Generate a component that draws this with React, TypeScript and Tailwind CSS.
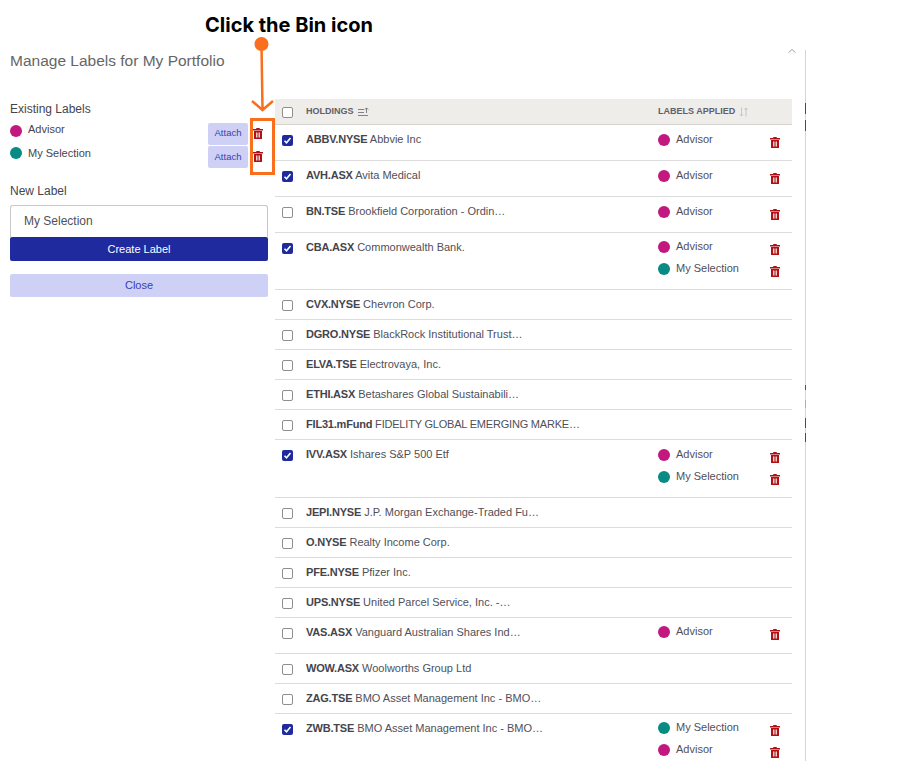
import React from "react";

const font = { fontFamily: '"Liberation Sans", Arial, sans-serif' };

type Label = "Advisor" | "My Selection";

interface Holding {
  ticker: string;
  name: string;
  checked?: boolean;
  tight?: boolean;
  nudge?: boolean;
  labels?: Label[];
}

const HOLDINGS: Holding[] = [
  { ticker: "ABBV.NYSE", name: "Abbvie Inc", checked: true, labels: ["Advisor"] },
  { ticker: "AVH.ASX", name: "Avita Medical", checked: true, labels: ["Advisor"] },
  { ticker: "BN.TSE", name: "Brookfield Corporation - Ordin…", labels: ["Advisor"] },
  { ticker: "CBA.ASX", name: "Commonwealth Bank.", checked: true, nudge: true, labels: ["Advisor", "My Selection"] },
  { ticker: "CVX.NYSE", name: "Chevron Corp." },
  { ticker: "DGRO.NYSE", name: "BlackRock Institutional Trust…" },
  { ticker: "ELVA.TSE", name: "Electrovaya, Inc." },
  { ticker: "ETHI.ASX", name: "Betashares Global Sustainabili…" },
  { ticker: "FIL31.mFund", name: "FIDELITY GLOBAL EMERGING MARKE…", tight: true },
  { ticker: "IVV.ASX", name: "Ishares S&P 500 Etf", checked: true, labels: ["Advisor", "My Selection"] },
  { ticker: "JEPI.NYSE", name: "J.P. Morgan Exchange-Traded Fu…" },
  { ticker: "O.NYSE", name: "Realty Income Corp." },
  { ticker: "PFE.NYSE", name: "Pfizer Inc." },
  { ticker: "UPS.NYSE", name: "United Parcel Service, Inc. -…" },
  { ticker: "VAS.ASX", name: "Vanguard Australian Shares Ind…", nudge: true, labels: ["Advisor"] },
  { ticker: "WOW.ASX", name: "Woolworths Group Ltd" },
  { ticker: "ZAG.TSE", name: "BMO Asset Management Inc - BMO…" },
  { ticker: "ZWB.TSE", name: "BMO Asset Management Inc - BMO…", checked: true, nudge: true, labels: ["My Selection", "Advisor"] },
];

function Bin() {
  return (
    <svg width="10" height="11" viewBox="0 0 10 11" className="block shrink-0">
      <path
        fill="#b01116"
        fillRule="evenodd"
        d="M3.5 0h3l.5 1.1h3v1.4H0V1.1h3zM1 3h8v8H1zM3.2 4.6v4.8h1.2V4.6zm2.4 0v4.8h1.2V4.6z"
      />
    </svg>
  );
}

function Dot({ label }: { label: Label }) {
  return <span className={`block w-3 h-3 rounded-full shrink-0 ${label === "Advisor" ? "bg-[#c2187f]" : "bg-[#078b83]"}`} />;
}

function Check({ checked }: { checked?: boolean }) {
  if (checked) {
    return (
      <span className="w-[11px] h-[11px] rounded-[2px] bg-[#1f2a9e] flex items-center justify-center shrink-0">
        <svg width="9" height="9" viewBox="0 0 9 9">
          <path d="M1.5 4.8l2 2 4-4.8" fill="none" stroke="#fff" strokeWidth="1.6" />
        </svg>
      </span>
    );
  }
  return <span className="block w-[11px] h-[11px] rounded-[2px] border border-[#8e8e8e] bg-white shrink-0" />;
}

function Row({ h }: { h: Holding }) {
  const labels = h.labels ?? [];
  let pad = "pt-[8px] pb-[8px]";
  if (labels.length > 0) {
    if (!h.nudge) pad = "pt-[8px] pb-[14px]";
    else pad = labels.length === 1 ? "pt-[7px] pb-[15px]" : "pt-[7px] pb-[14px]";
  }
  return (
    <div className="flex border-b border-[#dcdcdc] text-[11px] text-[#4f5058] last:border-b-0">
      <div className="w-[31px] pl-[7px] pt-[10px] shrink-0">
        <Check checked={h.checked} />
      </div>
      <div className={`w-[352px] shrink-0 pt-[8px] pb-[8px] leading-[13px] whitespace-nowrap ${h.tight ? "tracking-[-0.2px]" : ""}`}>
        <span className="font-bold text-[#44454c] tracking-[-0.2px]">{h.ticker}</span> {h.name}
      </div>
      <div className={`flex-1 flex flex-col gap-[9px] ${pad}`}>
        {labels.map((l) => (
          <div key={l} className="flex items-center h-[13px]">
            <Dot label={l} />
            <span className="ml-[6px] w-[94px]">{l}</span>
            <span className="block mt-[6px]">
              <Bin />
            </span>
          </div>
        ))}
      </div>
    </div>
  );
}

export default function App() {
  return (
    <div className="relative w-[917px] h-[761px] overflow-hidden bg-white pt-[50px]" style={font}>
      <div className="w-[806px] h-[711px] border-r border-[#d4d4d4]">
        <h1 className="pl-[10px] pt-[1px] text-[15.5px] leading-[20px] font-normal text-[#666666]">Manage Labels for My Portfolio</h1>

        <div className="flex mt-[28px] pl-[10px]">
          {/* Left column */}
          <div className="w-[258px] shrink-0 text-[11px] text-[#44454c]">
            <p className="text-[12px] leading-[19px] mt-[1px]">Existing Labels</p>
            <div className="flex items-center h-[23px] -mb-px">
              <Dot label="Advisor" />
              <span className="ml-[6px] flex-1 -mt-[3px]">Advisor</span>
              <button className="w-[40px] h-[22px] mt-[6px] rounded-[2px] bg-[#ced1f5] text-[#3a40b0] text-[9.5px]">Attach</button>
              <span className="block w-[20px] pl-[5px] mt-[5px]">
                <Bin />
              </span>
            </div>
            <div className="flex items-center h-[23px] mt-[1px]">
              <span className="block -mt-[2px]">
                <Dot label="My Selection" />
              </span>
              <span className="ml-[6px] flex-1">My Selection</span>
              <button className="w-[40px] h-[22px] mt-[7px] rounded-[2px] bg-[#ced1f5] text-[#3a40b0] text-[9.5px]">Attach</button>
              <span className="block w-[20px] pl-[5px] mt-[5px]">
                <Bin />
              </span>
            </div>

            <p className="text-[12px] leading-[16px] mt-[18px]">New Label</p>
            <div className="mt-[6px] h-[32px] pl-[13px] pb-[1px] flex items-center rounded-t-[3px] border border-b-0 border-[#c8c8c8] text-[12px] text-[#4f5058]">My Selection</div>
            <button className="block w-full h-[24px] rounded-[2px] bg-[#1f2a9e] text-white text-[11px]">Create Label</button>
            <button className="block w-full h-[23px] mt-[13px] rounded-[2px] bg-[#ced1f5] text-[#3a40b0] text-[11px]">Close</button>
          </div>

          {/* Holdings table */}
          <div className="ml-[7px] w-[517px] shrink-0">
            <div className="flex items-center h-[26px] pt-[1px] bg-[#eeedea] border-b border-[#d4d3cd] text-[9px] font-bold text-[#5f6068]">
              <div className="w-[31px] pl-[7px]">
                <Check />
              </div>
              <div className="w-[352px] flex items-center gap-[4px]">
                HOLDINGS
                <svg width="11" height="10" viewBox="0 0 11 10">
                  <path d="M0 2.5h6M0 5.5h6M0 8.5h10M8.5 6V1M6.8 2.6l1.7-1.7 1.7 1.7" fill="none" stroke="#66676e" strokeWidth="0.8" />
                </svg>
              </div>
              <div className="flex items-center gap-[4px]">
                LABELS APPLIED
                <svg width="10" height="10" viewBox="0 0 10 10">
                  <path d="M2.5 0.5v8.5M1 7.5l1.5 1.5L4 7.5M7 9.5V1M5.5 2.5L7 1l1.5 1.5" fill="none" stroke="#b9bac0" strokeWidth="0.8" />
                </svg>
              </div>
            </div>
            {HOLDINGS.map((h) => (
              <Row key={h.ticker} h={h} />
            ))}
          </div>
        </div>
      </div>

      {/* Close chevron peeking at the modal corner */}
      <svg width="8" height="4" viewBox="0 0 8 4" className="absolute left-[788px] top-[49px]">
        <path d="M0.5 3.5L4 0.5l3.5 3" fill="none" stroke="#8a8a8a" strokeWidth="0.8" />
      </svg>

      {/* Bits of the page behind the modal showing along its edge */}
      <div className="absolute left-[805px] top-[103px] w-px h-[11px] bg-[#3a40b0]" />
      <div className="absolute left-[805px] top-[120px] w-px h-[11px] bg-[#3a40b0]" />
      <div className="absolute left-[805px] top-[385px] w-px h-[5px] bg-[#555555]" />
      <div className="absolute left-[805px] top-[400px] w-px h-[8px] bg-[#a9a9d8]" />
      <div className="absolute left-[805px] top-[418px] w-px h-[10px] bg-[#3a40b0]" />
      <div className="absolute left-[805px] top-[433px] w-px h-[9px] bg-[#3a40b0]" />

      {/* Tutorial annotation */}
      <div className="absolute left-[205px] top-[13px] text-[20px] leading-[24px] font-bold text-black whitespace-nowrap" style={{ fontFamily: "Inter, sans-serif" }}>
        Click the Bin icon
      </div>
      <svg width="40" height="80" viewBox="0 0 40 80" className="absolute left-[242px] top-[36px]">
        <circle cx="19.5" cy="8" r="7" fill="#f96f1d" />
        <path d="M19.5 10L20.5 73M10 65l10.5 9L31 65" fill="none" stroke="#f96f1d" strokeWidth="2.5" />
      </svg>
      <div className="absolute left-[250px] top-[118px] w-[25px] h-[57px] border-[3px] border-[#f96f1d]" />
    </div>
  );
}
